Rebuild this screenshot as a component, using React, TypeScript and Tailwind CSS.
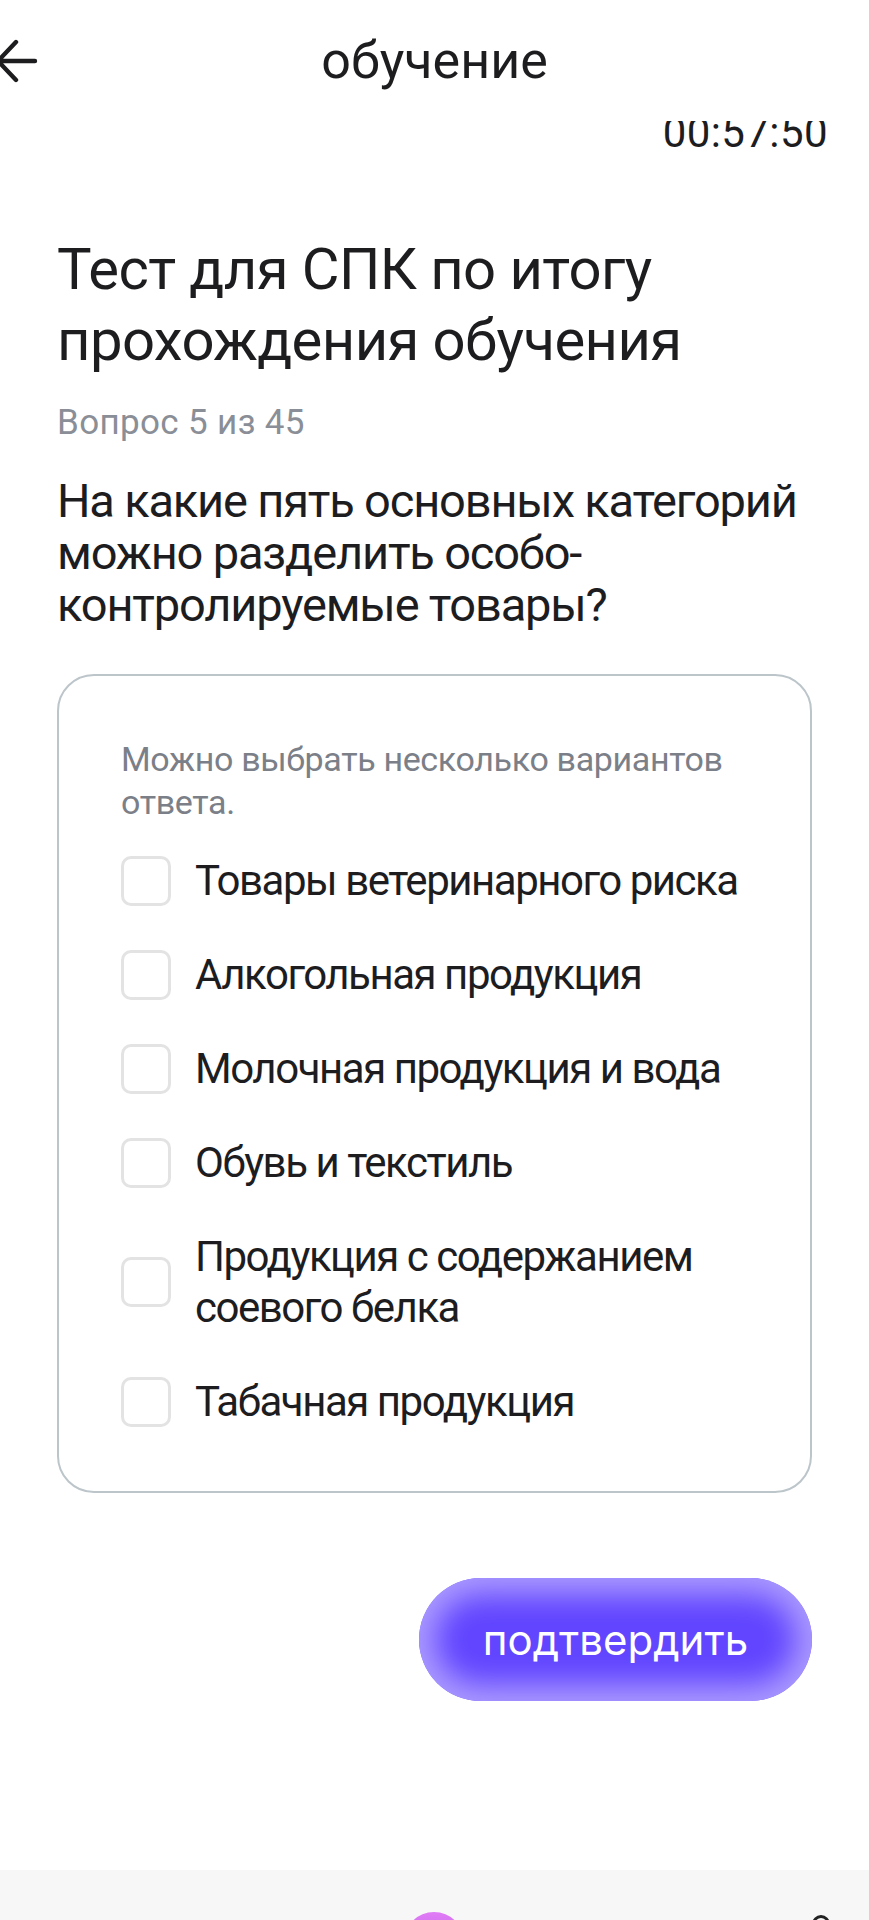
import React from 'react';

const options = [
  'Товары ветеринарного риска',
  'Алкогольная продукция',
  'Молочная продукция и вода',
  'Обувь и текстиль',
  'Продукция с содержанием соевого белка',
  'Табачная продукция',
];

export default function App() {
  return (
    <div
      className="w-[869px] min-h-[1920px] bg-white flex flex-col overflow-hidden text-[#1d1d1f]"
      style={{ fontFamily: 'Roboto, "Noto Sans", sans-serif' }}
    >
      {/* Header */}
      <div className="relative z-10 bg-white h-[121px] grid grid-cols-[1fr_auto_1fr] items-center">
        <div className="flex items-center">
          <svg width="40" height="46" viewBox="0 0 40 46" fill="none">
            <path
              d="M-2 23 H35 M16 4 L-2 23 L16 42"
              stroke="#1d1d1f"
              strokeWidth="4.4"
              strokeLinecap="round"
              strokeLinejoin="round"
            />
          </svg>
        </div>
        <h1 className="text-[52px] leading-none font-normal">обучение</h1>
        <div />
      </div>

      {/* Timer (scrolled under header) */}
      <div className="-mt-[9px] pr-[41px] text-right text-[42px] leading-[42px] tracking-[0.01em] text-[#1d1d1f]">
        00:57:50
      </div>

      {/* Content */}
      <div className="px-[57px]">
        <h2 className="mt-[80px] text-[58px] leading-[71px] font-normal tracking-[-0.01em]">
          Тест для СПК по итогу прохождения обучения
        </h2>
        <p className="mt-[25px] text-[35px] leading-[44px] tracking-[0.01em] text-[#8a8e96]">Вопрос 5 из 45</p>
        <p className="mt-[30px] w-[790px] text-[47px] leading-[52px] tracking-[-0.025em]">
          На какие пять основных категорий можно разделить особо-контролируемые товары?
        </p>

        {/* Answers card */}
        <div className="mt-[43px] border-2 border-[#bcc5ca] rounded-[37px] pl-[62px] pr-[20px] pt-[62px] pb-[64px]">
          <p className="text-[34px] leading-[43px] tracking-[-0.01em] text-[#7b8088]">
            Можно выбрать несколько вариантов ответа.
          </p>
          <div className="mt-[31px] flex flex-col gap-[43px]">
            {options.map((o) => (
              <label key={o} className="flex items-center gap-[24px]">
                <span className="shrink-0 w-[50px] h-[50px] rounded-[10px] border-[3px] border-[#e3e3e3] bg-white" />
                <span className="text-[42px] leading-[51px] tracking-[-0.035em]">{o}</span>
              </label>
            ))}
          </div>
        </div>

        {/* Confirm */}
        <div className="mt-[85px] flex justify-end">
          <button
            className="w-[393px] h-[123px] rounded-full bg-[#6145ff] text-white text-[42px] shadow-[inset_0_0_30px_16px_rgba(176,160,255,0.95)]"
            style={{ fontFamily: 'Inter, Roboto, sans-serif' }}
          >
            подтвердить
          </button>
        </div>
      </div>

      {/* Bottom nav peeking */}
      <div className="mt-auto h-[50px] bg-[#f7f7f8] grid grid-cols-3 overflow-hidden">
        <div />
        <div className="flex justify-center pt-[42px]">
          <div className="w-[60px] h-[60px] shrink-0 rounded-full bg-gradient-to-b from-[#e07cf5] to-[#b24ee6]" />
        </div>
        <div className="flex justify-end pr-[39px] pt-[45px]">
          <div className="w-[18px] h-[18px] shrink-0 rounded-full border-[3px] border-[#222]" />
        </div>
      </div>
    </div>
  );
}
